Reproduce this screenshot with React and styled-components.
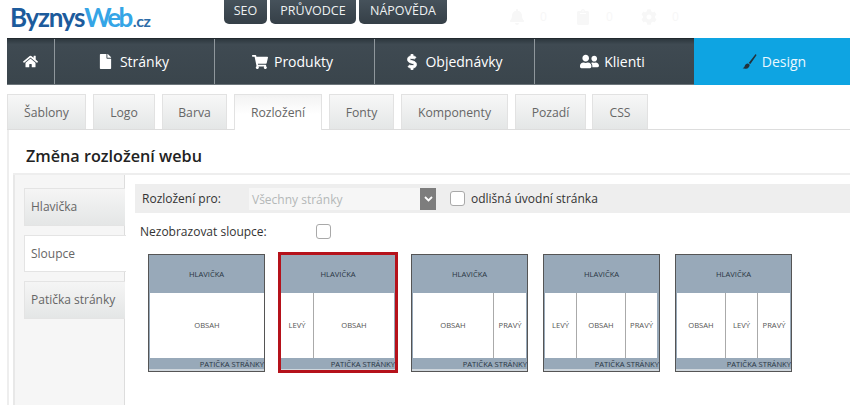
import React from "react";
import styled, { createGlobalStyle } from "styled-components";
import { FaHome, FaFile, FaShoppingCart, FaDollarSign, FaUserFriends, FaBell, FaClipboard, FaCog } from "react-icons/fa";

const Global = createGlobalStyle`
  html, body { margin: 0; padding: 0; background: #fff; }
  body { width: 850px; height: 405px; overflow: hidden; font-family: "Open Sans", "Liberation Sans", sans-serif; color: #333; }
  * { box-sizing: border-box; }
`;
const Page = styled.div`display: flex; flex-direction: column; width: 850px; height: 405px; overflow: hidden;`;
const Top = styled.header`display: flex; height: 38px; align-items: flex-start;`;
const Logo = styled.div`width: 224px; padding: 2px 0 0 10px; font-family: "Lato", sans-serif; font-size: 26px; line-height: 30px; font-weight: 700; white-space: nowrap;`;
const LogoA = styled.span`color: #1c5b9c; letter-spacing: -1.25px;`;
const LogoB = styled.span`color: #35a5e6; letter-spacing: -2.6px;`;
const LogoC = styled.span`color: #2c6ca8; font-size: 16px; font-weight: 700; letter-spacing: -0.4px; margin-left: 2px;`;
const TopLinks = styled.nav`display: flex; gap: 3px; width: 258px;`;
const TopLink = styled.div`
  width: ${p => p.$w}px; height: 24px; border-radius: 0 0 5px 5px; background: linear-gradient(#46525b, #353f47);
  color: #eef1f2; font-size: 12.5px; line-height: 22px; text-align: center; white-space: nowrap;
`;
const Stats = styled.div`display: flex; padding: 8px 0 0 27px; color: #f7f7f7;`;
const Stat = styled.div`display: flex; align-items: center; width: 66px; gap: 15px; font-size: 12px; line-height: 18px; svg { width: 16px; height: 16px; }`;
const Nav = styled.nav`display: flex; height: 47px; margin-left: 7px; background: linear-gradient(#2d373e, #3f4a52 12%, #3a454c); border-top: 1px solid #22292e; border-bottom: 1px solid #6d767b;`;
const NavItem = styled.div`
  width: ${p => p.$w}px; display: flex; align-items: center; justify-content: center; gap: ${p => p.$gap ?? 8}px;
  padding-right: ${p => p.$shift ?? 0}px; padding-left: ${p => p.$push ?? 0}px;
  border-left: ${p => p.$first ? "0" : "1px solid #8f979c"}; color: #fff; font-size: 14px; white-space: nowrap;
  ${p => p.$active && "background: #0ea4e2; color: #e9f8ff; margin: -1px 0; border-left: 0;"}
  svg { width: ${p => p.$icon ?? 16}px; height: ${p => p.$icon ?? 16}px; color: ${p => p.$active ? "#23323c" : "#fff"}; }
`;
const Tabs = styled.div`display: flex; height: 36px; margin: 9px 0 0 7px; border-bottom: 1px solid #ddd;`;
const Tab = styled.div`
  width: ${p => p.$w}px; margin-right: ${p => p.$mr ?? 7}px; height: ${p => p.$active ? 36 : 35}px; border: 1px solid #e2e2e2; border-bottom: 0;
  background: ${p => p.$active ? "linear-gradient(#f3f3f3, #fff 55%)" : "linear-gradient(#f7f7f7, #e4e6e6)"};
  color: #666; font-size: 12.2px; line-height: 35px; text-align: center;
`;
const Main = styled.main`margin-left: 7px; border-left: 2px solid #eee; flex: 1; display: flex; flex-direction: column;`;
const Title = styled.h1`margin: 15px 0 0 17px; height: 28px; font-size: 16.2px; line-height: 22px; font-weight: 600; color: #222;`;
const Panel = styled.div`flex: 1; margin-left: 4px; border-top: 2px solid #eee; display: flex;`;
const Side = styled.aside`width: 112px; padding: 13px 0 0 9px; background: #f6f6f6; border-left: 2px solid #e8e8e8; border-right: 1px solid #ddd; display: flex; flex-direction: column; gap: 9px;`;
const SideTab = styled.div`
  height: 37.5px; margin-right: ${p => p.$active ? -2 : -1}px; padding-left: 6px; font-size: 12px; line-height: 36px; color: #666; white-space: nowrap;
  border: 1px solid #e4e4e4; border-right: 0; position: relative;
  background: ${p => p.$active ? "#fff" : "linear-gradient(#f5f5f5, #e4e6e6)"};
`;
const Content = styled.section`flex: 1; padding: 9px 0 0 10px;`;
const Bar = styled.div`height: 29px; background: #eee; display: flex; align-items: center; padding-left: 7px; font-size: 12px; color: #333;`;
const BarLabel = styled.span`width: 107px;`;
const Select = styled.div`width: 187px; height: 22px; background: #f6f6f6; color: #b4b8b8; padding-left: 3px; font-size: 12px; line-height: 23px; display: flex; justify-content: space-between;`;
const Arrow = styled.span`width: 16px; height: 22px; background: #7d7d7d; display: flex; align-items: center; justify-content: center;`;
const Check = styled.span`display: block; width: 15px; height: 15px; background: #fff; border: 1.5px solid #a9a9a9; border-radius: 3px;`;
const BarCheck = styled.span`margin-left: 14px; margin-right: 6px;`;
const Row = styled.div`display: flex; align-items: center; height: 24px; margin-top: 6px; padding-left: 5px; font-size: 12px;`;
const RowLabel = styled.span`width: 176px;`;
const Layouts = styled.div`display: flex; align-items: flex-start; margin: 11px 0 0 13px;`;
const Card = styled.div`
  width: ${p => p.$sel ? 120 : 117}px; height: ${p => p.$sel ? 121 : 118}px; margin-right: ${p => p.$mr}px; margin-top: ${p => p.$sel ? -2 : 0}px;
  border: ${p => p.$sel ? "3px solid #b5121b" : "1px solid #555"}; background: #cfd6dc; display: flex; flex-direction: column; overflow: hidden;
`;
const Head = styled.div`height: 38px; background: #98a9b9; color: #2a3644; font-size: 7.6px; line-height: 38px; text-align: center;`;
const Cols = styled.div`display: flex; height: 65px; background: #98a9b9; gap: 1px; padding-left: ${p => p.$sel ? 0 : 1}px;`;
const Col = styled.div`
  width: ${p => p.$w}px; background: #fff; font-size: 7.6px; line-height: 65px; text-align: center; color: #555;
  & + & { box-shadow: -1px 0 0 #aaa; }
`;
const Foot = styled.div`height: 11px; background: #98a9b9; color: #2a3644; font-size: 7.6px; line-height: 12px; text-align: right; white-space: nowrap;`;

const layouts = [
  { mr: 13, cols: [["OBSAH", 114]] },
  { mr: 13, sel: true, cols: [["LEVÝ", 32], ["OBSAH", 80]] },
  { mr: 15, cols: [["OBSAH", 80], ["PRAVÝ", 32]] },
  { mr: 15, cols: [["LEVÝ", 31], ["OBSAH", 48], ["PRAVÝ", 31]] },
  { mr: 0, cols: [["OBSAH", 48], ["LEVÝ", 31], ["PRAVÝ", 32]] },
];

const Brush = () => (
  <svg viewBox="0 0 20 20" fill="currentColor">
    <path d="M18.8 .6c.6.3.6.9.3 1.5L11.2 13.4 8.9 12 17.4 1c.4-.5.9-.7 1.4-.4z" />
    <path d="M8 12.6l2.4 1.6c-.5 2.6-2.2 5.2-5.2 5.4-1.5.1-3-.1-4.4-.6 1.8-.6 2.4-1.6 2.8-3 .6-2.2 2.4-3.6 4.4-3.4z" />
  </svg>
);

export default function App() {
  return (
    <Page>
      <Global />
      <Top>
        <Logo><LogoA>Byznys</LogoA><LogoB>Web</LogoB><LogoC>.cz</LogoC></Logo>
        <TopLinks>
          <TopLink $w={43}>SEO</TopLink>
          <TopLink $w={86}>PRŮVODCE</TopLink>
          <TopLink $w={88}>NÁPOVĚDA</TopLink>
        </TopLinks>
        <Stats>
          <Stat><FaBell />0</Stat>
          <Stat><FaClipboard />0</Stat>
          <Stat><FaCog />0</Stat>
        </Stats>
      </Top>
      <Nav>
        <NavItem $w={47} $first $icon={15} $gap={0}><FaHome /></NavItem>
        <NavItem $w={160} $icon={15} $gap={7} $shift={2}><FaFile />Stránky</NavItem>
        <NavItem $w={160} $gap={6} $shift={4}><FaShoppingCart />Produkty</NavItem>
        <NavItem $w={160} $gap={5} $shift={2}><FaDollarSign stroke="currentColor" strokeWidth="25" />Objednávky</NavItem>
        <NavItem $w={160} $gap={5} $icon={19} $shift={4}><FaUserFriends />Klienti</NavItem>
        <NavItem $w={156} $active $gap={5} $icon={15} $push={4}><Brush />Design</NavItem>
      </Nav>
      <Tabs>
        <Tab $w={79}>Šablony</Tab>
        <Tab $w={62}>Logo</Tab>
        <Tab $w={65}>Barva</Tab>
        <Tab $w={88} $active>Rozložení</Tab>
        <Tab $w={65}>Fonty</Tab>
        <Tab $w={107}>Komponenty</Tab>
        <Tab $w={71} $mr={6}>Pozadí</Tab>
        <Tab $w={56} $mr={0}>CSS</Tab>
      </Tabs>
      <Main>
        <Title>Změna rozložení webu</Title>
        <Panel>
          <Side>
            <SideTab>Hlavička</SideTab>
            <SideTab $active>Sloupce</SideTab>
            <SideTab>Patička stránky</SideTab>
          </Side>
          <Content>
            <Bar>
              <BarLabel>Rozložení pro:</BarLabel>
              <Select>
                Všechny stránky
                <Arrow>
                  <svg width="9" height="6" viewBox="0 0 9 6"><path d="M1 1l3.5 3.5L8 1" fill="none" stroke="#fff" strokeWidth="1.8" /></svg>
                </Arrow>
              </Select>
              <BarCheck><Check /></BarCheck>
              odlišná úvodní stránka
            </Bar>
            <Row>
              <RowLabel>Nezobrazovat sloupce:</RowLabel>
              <Check />
            </Row>
            <Layouts>
              {layouts.map((l, i) => (
                <Card key={i} $mr={l.mr} $sel={l.sel}>
                  <Head>HLAVIČKA</Head>
                  <Cols $sel={l.sel}>
                    {l.cols.map(([t, w]) => <Col key={t} $w={w}>{t}</Col>)}
                  </Cols>
                  <Foot>PATIČKA STRÁNKY</Foot>
                </Card>
              ))}
            </Layouts>
          </Content>
        </Panel>
      </Main>
    </Page>
  );
}
